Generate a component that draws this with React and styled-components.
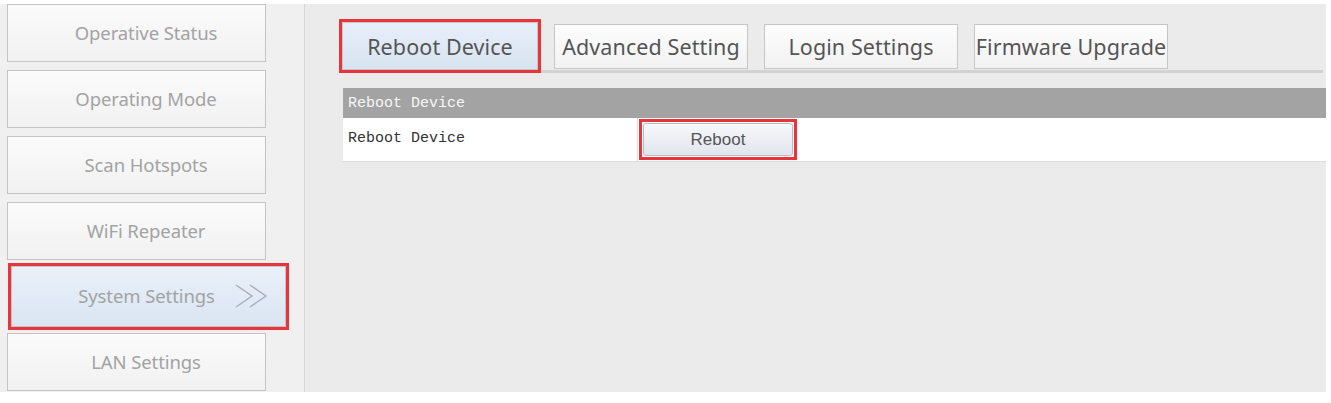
import React from "react";
import styled, { createGlobalStyle } from "styled-components";

const Global = createGlobalStyle`
  html, body { margin: 0; padding: 0; background: #ffffff; }
  body { font-family: "Noto Sans", "Open Sans", sans-serif; }
`;

const Page = styled.div`
  display: flex;
  padding-top: 4px;
  height: 388px;
  width: 1326px;
`;

const Sidebar = styled.nav`
  width: 297px;
  padding-left: 7px;
  background: #f0f0f0;
  border-right: 1px solid #d6d6d6;
  display: flex;
  flex-direction: column;
  gap: 8px;
`;

const NavItem = styled.div`
  box-sizing: border-box;
  width: ${(p) => (p.$active ? "275px" : "259px")};
  height: ${(p) => (p.$active ? "61px" : "58px")};
  margin: ${(p) => (p.$active ? "-2px 0 -2px 4px" : "0")};
  border: 1px solid #c4c4c4;
  background: ${(p) =>
    p.$active
      ? "linear-gradient(180deg, #e9f0f9 0%, #dae5f3 100%)"
      : "linear-gradient(180deg, #fbfbfb 0%, #f1f1f1 100%)"};
  outline: ${(p) => (p.$active ? "3px solid #e8343a" : "none")};
  display: flex;
  align-items: center;
  justify-content: center;
  gap: 20px;
  padding-left: ${(p) => (p.$active ? "50px" : "19px")};
  padding-bottom: 2px;
  color: #a3a3a3;
  font-size: 18.5px;
  letter-spacing: -0.1px;
`;

const Chevrons = styled.svg`
  width: 34px;
  height: 24px;
  flex: none;
`;

const Main = styled.main`
  flex: 1;
  background: #ebebeb;
  padding-top: 18px;
  padding-left: 37px;
  display: flex;
  flex-direction: column;
`;

const TabRow = styled.div`
  display: flex;
  align-items: flex-start;
  gap: 16px;
  border-bottom: 3px solid #d2d2d2;
  height: 48px;
  margin-right: 3px;
`;

const Tab = styled.div`
  box-sizing: border-box;
  width: ${(p) => (p.$active ? "196px" : "194px")};
  height: ${(p) => (p.$active ? "48px" : "45px")};
  margin-top: ${(p) => (p.$active ? "0" : "2px")};
  border: 1px solid #c6c6c6;
  background: ${(p) =>
    p.$active
      ? "linear-gradient(180deg, #e6eef9 0%, #d9e4f2 100%)"
      : "linear-gradient(180deg, #fdfdfd 0%, #f2f2f2 100%)"};
  outline: ${(p) => (p.$active ? "3px solid #e8343a" : "none")};
  display: flex;
  align-items: center;
  justify-content: center;
  color: #555555;
  font-size: 21.5px;
  letter-spacing: 0.1px;
  white-space: nowrap;
`;

const Table = styled.div`
  margin-top: 15px;
  margin-left: 1px;
  background: #ffffff;
  border-bottom: 1px solid #dcdcdc;
`;

const HeaderRow = styled.div`
  height: 30px;
  background: #a3a3a3;
  color: #f7f7f7;
  display: flex;
  align-items: center;
  padding-left: 5px;
  font-family: "Liberation Mono", "DejaVu Sans Mono", monospace;
  font-size: 15px;
`;

const Row = styled.div`
  display: flex;
  height: 43px;
`;

const LabelCell = styled.div`
  width: 289px;
  padding-left: 5px;
  padding-bottom: 2px;
  border-right: 1px solid #e0e0e0;
  display: flex;
  align-items: center;
  color: #333333;
  font-family: "Liberation Mono", "DejaVu Sans Mono", monospace;
  font-size: 15px;
`;

const ValueCell = styled.div`
  flex: 1;
  display: flex;
  align-items: center;
  padding-left: 1px;
`;

const Highlight = styled.div`
  border: 3px solid #e8343a;
  padding: 1px;
  display: flex;
`;

const Button = styled.button`
  box-sizing: border-box;
  width: 150px;
  height: 33px;
  border: 1px solid #b9bcc2;
  border-radius: 3px;
  background: linear-gradient(180deg, #f7f8fb 0%, #e1e5ec 100%);
  color: #555555;
  font-family: "Liberation Sans", Arial, sans-serif;
  font-size: 17px;
  padding: 0;
`;

const navItems = [
  "Operative Status",
  "Operating Mode",
  "Scan Hotspots",
  "WiFi Repeater",
  "System Settings",
  "LAN Settings",
];

const tabs = ["Reboot Device", "Advanced Setting", "Login Settings", "Firmware Upgrade"];

export default function App() {
  return (
    <>
      <Global />
      <Page>
        <Sidebar>
          {navItems.map((label) => {
            const active = label === "System Settings";
            return (
              <NavItem key={label} $active={active}>
                <span>{label}</span>
                {active && (
                  <Chevrons viewBox="0 0 34 24">
                    <polyline points="1,1 17,12 1,23" fill="none" stroke="#a8adb5" strokeWidth="1.4" />
                    <polyline points="15,1 31,12 15,23" fill="none" stroke="#a8adb5" strokeWidth="1.4" />
                  </Chevrons>
                )}
              </NavItem>
            );
          })}
        </Sidebar>
        <Main>
          <TabRow>
            {tabs.map((t, i) => (
              <Tab key={t} $active={i === 0}>
                {t}
              </Tab>
            ))}
          </TabRow>
          <Table>
            <HeaderRow>Reboot Device</HeaderRow>
            <Row>
              <LabelCell>Reboot Device</LabelCell>
              <ValueCell>
                <Highlight>
                  <Button>Reboot</Button>
                </Highlight>
              </ValueCell>
            </Row>
          </Table>
        </Main>
      </Page>
    </>
  );
}
